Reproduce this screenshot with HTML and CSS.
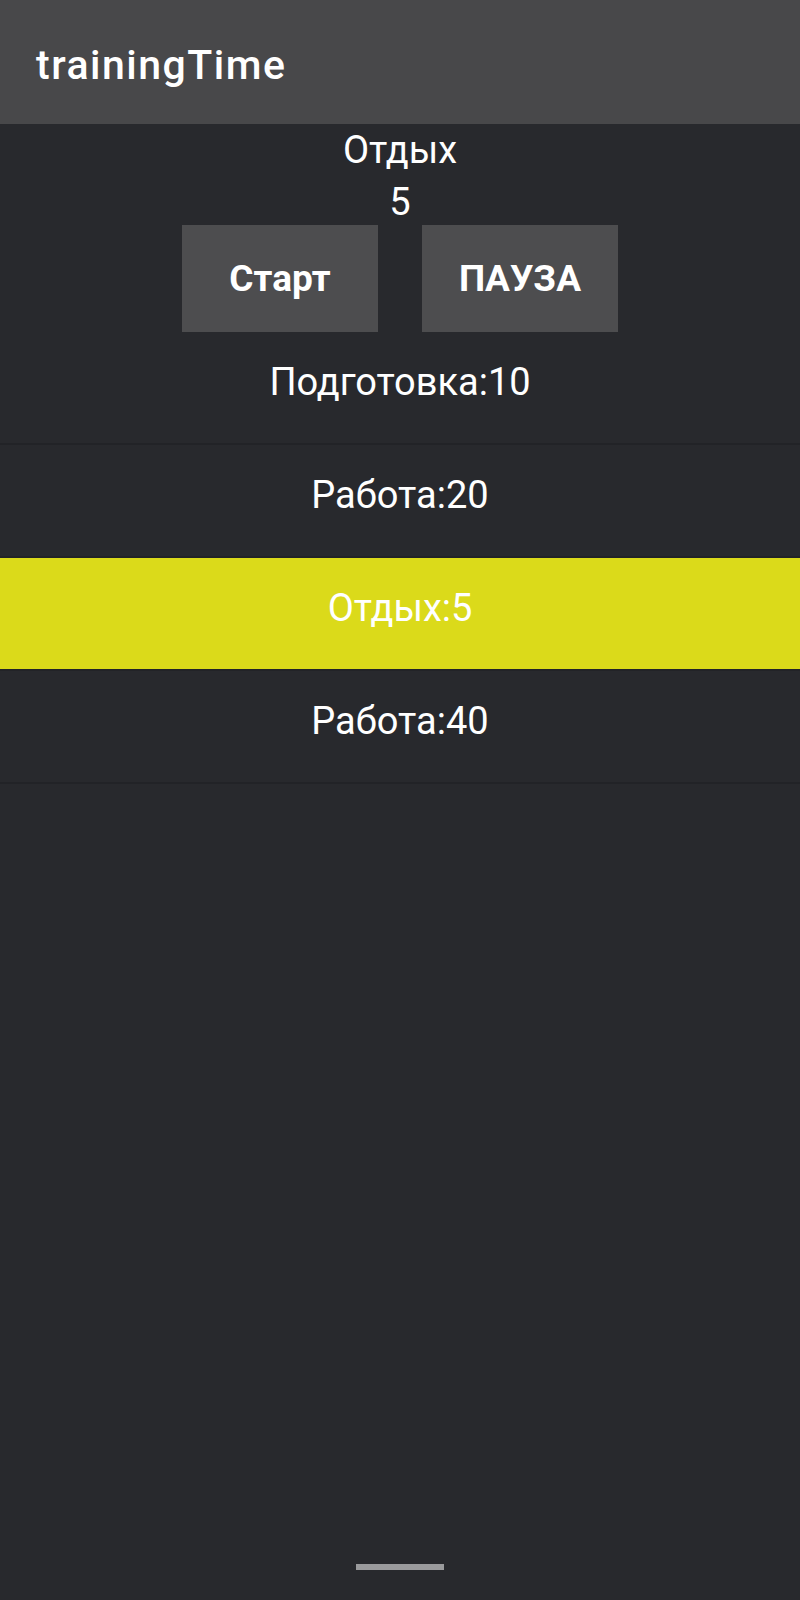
FILE: index.html
```html
<!DOCTYPE html>
<html lang="ru">
<head>
<meta charset="utf-8">
<title>trainingTime</title>
<link rel="stylesheet" href="styles.css">
</head>
<body class="app">
  <header class="appbar">
    <h1 class="title">trainingTime</h1>
  </header>
  <main class="content">
    <div class="status">
      <div class="phase">Отдых</div>
      <div class="count">5</div>
    </div>
    <div class="controls">
      <button class="btn">Старт</button>
      <button class="btn">ПАУЗА</button>
    </div>
    <ul class="intervals">
      <li class="row">Подготовка:10</li>
      <li class="row">Работа:20</li>
      <li class="row row-active">Отдых:5</li>
      <li class="row">Работа:40</li>
    </ul>
  </main>
  <div class="navbar"><span class="handle"></span></div>
</body>
</html>
```
FILE: styles.css
```css
html, body {
  margin: 0;
  padding: 0;
}
.app {
  width: 800px;
  min-height: 1600px;
  display: flex;
  flex-direction: column;
  background: #28292d;
  color: #ffffff;
  font-family: Roboto, "Noto Sans", sans-serif;
}
.appbar {
  height: 124px;
  box-sizing: border-box;
  background: #48484a;
  display: flex;
  align-items: center;
  padding: 5px 0 0 36px;
}
.title {
  margin: 0;
  font-size: 41px;
  font-weight: 500;
  letter-spacing: 1.5px;
}
.content {
  flex: 1;
  display: flex;
  flex-direction: column;
}
.status {
  display: flex;
  flex-direction: column;
  align-items: center;
  padding-top: 4px;
  gap: 8px;
}
.phase, .count {
  font-size: 38px;
  line-height: 44px;
}
.controls {
  display: flex;
  justify-content: center;
  gap: 44px;
  margin-top: 1px;
}
.btn {
  width: 196px;
  height: 107px;
  border: none;
  border-radius: 0;
  background: #4d4d4f;
  color: #ffffff;
  font-family: Roboto, "Noto Sans", sans-serif;
  font-size: 37px;
  font-weight: 700;
  padding: 0;
}
.intervals {
  list-style: none;
  margin: 0;
  padding: 0;
}
.row {
  box-sizing: content-box;
  height: 99px;
  padding-bottom: 12px;
  border-bottom: 2px solid #222327;
  display: flex;
  align-items: center;
  justify-content: center;
  font-size: 38px;
}
.row-active {
  background: #dbda1a;
}
.navbar {
  display: flex;
  justify-content: center;
  padding-bottom: 30px;
}
.handle {
  width: 88px;
  height: 6px;
  background: #9a9a9c;
}
```
